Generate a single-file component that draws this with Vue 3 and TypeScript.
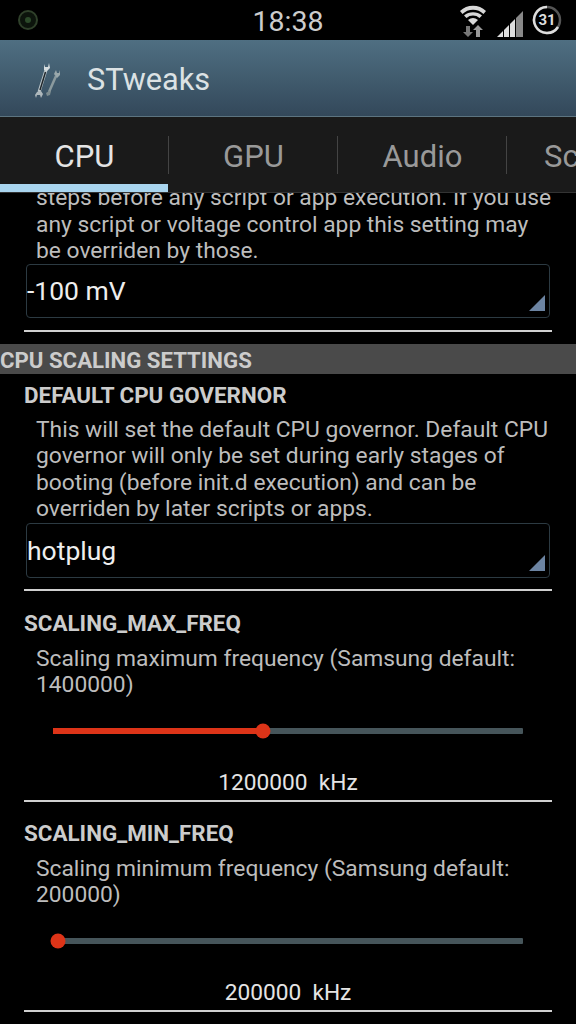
<template>
  <div class="phone">
    <div class="status-bar">
      <svg class="notif" width="22" height="22" viewBox="0 0 22 22">
        <circle cx="11" cy="11" r="9" fill="#0c140c" stroke="#2f402a" stroke-width="2" />
        <circle cx="11" cy="11" r="3" fill="#2c4a2a" />
      </svg>
      <span class="clock">18:38</span>
      <div class="status-icons">
        <svg width="30" height="36" viewBox="0 0 30 36">
          <path d="M2 9 A19 19 0 0 1 28 9 L25.5 12 A15 15 0 0 0 4.500 12 Z" fill="#d8d8d8" />
          <path d="M6 13.500 A14 14 0 0 1 24 13.500 L21.500 16 A10 10 0 0 0 8.500 16 Z" fill="#d8d8d8" />
          <path d="M10 18 A8 8 0 0 1 20 18 L15 23 Z" fill="#d8d8d8" />
          <path d="M8 24 h4 v6 h3 l-5 5 l-5 -5 h3 Z" fill="#777" />
          <path d="M18 35 h4 v-7 h3 l-5 -5 l-5 5 h3 Z" fill="#999" />
        </svg>
        <svg class="signal" width="26" height="26" viewBox="0 0 26 26">
          <path d="M0 26 L6 20 V26 Z" fill="#ddd" />
          <path d="M7 26 V19 L12 14 V26 Z" fill="#ddd" />
          <path d="M13 26 V13 L18 8 V26 Z" fill="#ddd" />
          <path d="M19 26 V7 L26 0 V26 Z" fill="#888" />
        </svg>
        <div class="battery">
          <svg width="30" height="30" viewBox="0 0 30 30">
            <circle cx="15" cy="15" r="13" fill="none" stroke="#555" stroke-width="2.500" />
            <path d="M15 2 A13 13 0 1 0 26 22" fill="none" stroke="#ddd" stroke-width="2.500" />
          </svg>
          <span>31</span>
        </div>
      </div>
    </div>

    <header class="action-bar">
      <svg class="app-icon" width="28" height="40" viewBox="0 0 28 40">
        <path d="M22 16 L15 32" stroke="#8b9a9e" stroke-width="2.500" />
        <path d="M20 14 L22 10 L23 13 L25 13 L26 10 L26 15 L23 18 Z" fill="#9aa8ab" />
        <path d="M15 31 L17 31 L16 35 L13 36 L12 33 Z" fill="#7d8c90" />
        <path d="M12 10 L5 32" stroke="#bcc6ca" stroke-width="3" />
        <path d="M11.500 12 L6 30" stroke="#1f262b" stroke-width="1.500" />
        <path d="M10 4 L11 7 L14 7 L15 3 L16 8 L13 11 L10 10 Z" fill="#d5dcde" />
        <path d="M3 32 L7 31 L9 34 L7 38 L6 35 L3 35 L2 38 L1 35 Z" fill="#aeb8bc" />
      </svg>
      <span class="app-title">STweaks</span>
    </header>

    <nav class="tabs">
      <div
        v-for="tab in tabs"
        :key="tab"
        class="tab"
        :class="{ active: tab === 'CPU' }"
      >
        {{ tab }}
      </div>
    </nav>

    <main class="content">
      <section class="setting first">
        <p class="desc">
          steps before any script or app execution. If you use any script or voltage control app this setting may be overriden by those.
        </p>
        <div class="spinner">
          <span>-100 mV</span>
          <i class="corner"></i>
        </div>
      </section>

      <h2 class="section-head">CPU SCALING SETTINGS</h2>

      <section class="setting governor">
        <h3>DEFAULT CPU GOVERNOR</h3>
        <p class="desc">
          This will set the default CPU governor. Default CPU governor will only be set during early stages of booting (before init.d execution) and can be overriden by later scripts or apps.
        </p>
        <div class="spinner">
          <span>hotplug</span>
          <i class="corner"></i>
        </div>
      </section>

      <section v-for="s in sliders" :key="s.name" class="setting slider-setting">
        <h3>{{ s.name }}</h3>
        <p class="desc">{{ s.desc }}</p>
        <div class="track">
          <div class="fill" :style="{ width: s.pct + '%' }"></div>
          <div class="thumb" :style="{ left: s.pct + '%' }"></div>
        </div>
        <div class="value">{{ s.value }}&nbsp; kHz</div>
      </section>
    </main>
  </div>
</template>

<script setup lang="ts">
const tabs = ['CPU', 'GPU', 'Audio', 'Screen']

const sliders = [
  {
    name: 'SCALING_MAX_FREQ',
    desc: 'Scaling maximum frequency (Samsung default: 1400000)',
    pct: 44.7,
    value: '1200000',
  },
  {
    name: 'SCALING_MIN_FREQ',
    desc: 'Scaling minimum frequency (Samsung default: 200000)',
    pct: 1,
    value: '200000',
  },
]
</script>

<style>
html,
body {
  background: #000;
}
</style>

<style scoped>
.phone {
  width: 576px;
  height: 1024px;
  overflow: hidden;
  background: #000;
  font-family: Roboto, "Liberation Sans", sans-serif;
  color: #ccc;
}

.status-bar {
  position: relative;
  z-index: 3;
  height: 40px;
  display: flex;
  align-items: center;
  justify-content: center;
  background: #000;
}

.notif {
  position: absolute;
  left: 17px;
  top: 9px;
}

.clock {
  font-size: 28.5px;
  color: #ccc;
  margin-top: 2px;
}

.status-icons {
  position: absolute;
  right: 14px;
  top: 0;
  height: 40px;
  display: flex;
  align-items: center;
  gap: 9px;
}

.signal {
  margin-top: 7px;
}

.battery {
  position: relative;
  width: 30px;
  height: 30px;
}

.battery span {
  position: absolute;
  inset: 0;
  text-align: center;
  line-height: 30px;
  font-size: 15px;
  font-weight: 700;
  color: #ddd;
}

.action-bar {
  position: relative;
  z-index: 3;
  height: 77px;
  display: flex;
  align-items: center;
  box-sizing: border-box;
  padding-left: 34px;
  padding-top: 3px;
  background: linear-gradient(#4f6f82, #33485a);
  border-bottom: 1px solid #5d7480;
}

.app-title {
  margin-left: 25px;
  font-size: 30.7px;
  color: #dce2e4;
}

.tabs {
  position: relative;
  z-index: 3;
  height: 76px;
  display: flex;
  background: #1a1a1a;
  border-bottom: 1px solid #333;
  box-sizing: border-box;
}

.tab {
  position: relative;
  flex: 0 0 169px;
  box-sizing: border-box;
  padding-top: 4px;
  display: flex;
  align-items: center;
  justify-content: center;
  font-size: 31px;
  color: #999;
}

.tab:not(:last-child)::after {
  content: "";
  position: absolute;
  right: 0;
  top: 19px;
  height: 38px;
  width: 1px;
  background: #444;
}

.tab.active {
  color: #e4e4e4;
}

.tab.active::before {
  content: "";
  position: absolute;
  left: 0;
  right: 1px;
  bottom: 0;
  height: 8px;
  background: #a9d5ef;
}

.content {
  position: relative;
  z-index: 1;
  margin-top: -10px;
}

.setting {
  margin: 0 24px;
  padding-bottom: 11px;
  border-bottom: 2px solid #d0d0d0;
}

.first {
  padding-bottom: 12px;
}

.desc {
  margin: 0 -3px 0 12px;
  font-size: 22.8px;
  line-height: 26.500px;
  color: #bdbdbd;
}

.first .desc {
  margin-top: 2px;
}

.spinner {
  position: relative;
  height: 55px;
  margin: 0 2px;
  box-sizing: border-box;
  border: 1px solid #2c3a42;
  border-radius: 4px;
  display: flex;
  align-items: center;
  font-size: 26.5px;
  color: #eee;
}

.first .spinner {
  margin-top: -1px;
  height: 54px;
}

.corner {
  position: absolute;
  right: 4px;
  bottom: 6px;
  width: 0;
  height: 0;
  border-left: 16px solid transparent;
  border-bottom: 16px solid #6c84a2;
}

.section-head {
  margin: 12px 0 0;
  height: 30px;
  line-height: 32px;
  background: #4a4a4a;
  font-size: 22.2px;
  font-weight: 700;
  color: #ccc;
  white-space: nowrap;
}

h3 {
  margin: 0;
  font-size: 22.4px;
  font-weight: 700;
  line-height: 24px;
  color: #ccc;
}

.governor {
  padding-top: 9px;
  padding-bottom: 11px;
}

.governor .desc {
  margin-top: 10px;
}

.slider-setting {
  padding: 20px 0 3px;
}

.slider-setting + .slider-setting {
  padding-top: 19px;
}

.slider-setting .desc {
  margin-top: 11px;
}

.track {
  position: relative;
  height: 6px;
  margin: 29px 29px 0;
  background: #46555a;
  border-radius: 1px;
}

.fill {
  height: 100%;
  background: #dd3418;
}

.thumb {
  position: absolute;
  top: 50%;
  width: 15px;
  height: 15px;
  border-radius: 50%;
  background: #dd3418;
  transform: translate(-50%, -50%);
}

.value {
  margin-top: 35px;
  height: 28px;
  line-height: 28px;
  text-align: center;
  font-size: 22.7px;
  color: #e4e4e4;
}
</style>
